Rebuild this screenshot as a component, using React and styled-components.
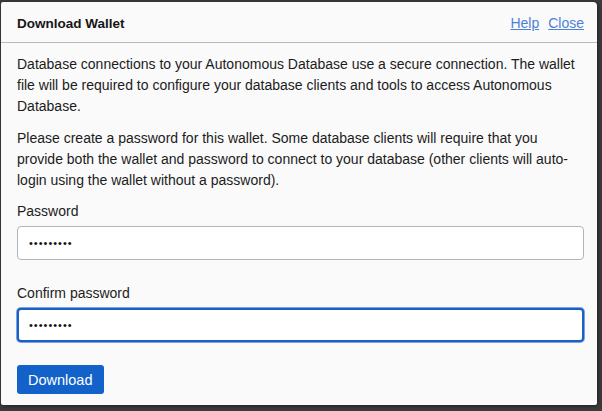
import React from "react";
import styled, { createGlobalStyle } from "styled-components";

const GlobalStyle = createGlobalStyle`
    html, body {
        margin: 0;
        padding: 0;
        background: #3c3c3c;
        font-family: "Liberation Sans", Arial, Helvetica, sans-serif;
    }
    #root {
        min-height: 411px;
        padding-top: 2px;
        padding-left: 1px;
        box-sizing: border-box;
    }
`;

const Dialog = styled.div`
    width: 596px;
    height: 403px;
    background: #fafafa;
    border-radius: 2px 4px 2px 2px;
    box-shadow: 1px 1px 4px rgba(0, 0, 0, 0.5);
    box-sizing: border-box;
    display: flex;
    flex-direction: column;
    overflow: hidden;
`;

const Header = styled.div`
    height: 42px;
    box-sizing: border-box;
    padding: 2px 13px 0 16px;
    border-bottom: 1px solid #b6b9c2;
    display: flex;
    align-items: center;
    justify-content: space-between;
`;

const Title = styled.h1`
    margin: 0;
    font-size: 13.5px;
    font-weight: bold;
    color: #161616;
`;

const Links = styled.div`
    display: flex;
    gap: 9px;
`;

const HeaderLink = styled.a`
    font-size: 14px;
    color: #4f80d8;
    text-decoration: underline;
    cursor: pointer;
`;

const Body = styled.div`
    padding: 11px 13px 11px 16px;
    color: #1c1c1c;
    font-size: 14px;
    line-height: 21px;
`;

const Paragraph = styled.p`
    margin: 0 0 ${(p) => (p.$last ? "10px" : "11px")};
`;

const Field = styled.div`
    display: flex;
    flex-direction: column;
    margin-bottom: ${(p) => p.$gap};
`;

const Label = styled.label`
    font-size: 14px;
    line-height: 21px;
    color: #1c1c1c;
    margin-bottom: 4px;
`;

const Input = styled.input`
    height: 34px;
    box-sizing: border-box;
    background: #fff;
    border: ${(p) => (p.$focused ? "2px solid #1a5fc6" : "1px solid #b1b4ba")};
    box-shadow: ${(p) => (p.$focused ? "0 0 0 1px #79a2e6" : "none")};
    border-radius: 4px;
    padding: 0 ${(p) => (p.$focused ? "10px" : "11px")};
    font-size: 11px;
    font-family: "Liberation Sans", Arial, sans-serif;
    color: #111;
    caret-color: #111;
    outline: none;
    letter-spacing: 1px;
`;

const DownloadButton = styled.button`
    align-self: flex-start;
    height: 29px;
    padding: 0 11px;
    border: none;
    border-radius: 3px;
    background: #1262c9;
    color: #fff;
    font-size: 14.5px;
    font-family: "Liberation Sans", Arial, sans-serif;
    cursor: pointer;
`;

export default function App() {
    return (
        <>
            <GlobalStyle />
            <Dialog role="dialog">
                <Header>
                    <Title>Download Wallet</Title>
                    <Links>
                        <HeaderLink>Help</HeaderLink>
                        <HeaderLink>Close</HeaderLink>
                    </Links>
                </Header>
                <Body>
                    <Paragraph>
                        Database connections to your Autonomous Database use a secure connection. The wallet
                        file will be required to configure your database clients and tools to access Autonomous
                        Database.
                    </Paragraph>
                    <Paragraph $last>
                        Please create a password for this wallet. Some database clients will require that you
                        provide both the wallet and password to connect to your database (other clients will auto-
                        login using the wallet without a password).
                    </Paragraph>
                    <Field $gap="23px">
                        <Label htmlFor="pw">Password</Label>
                        <Input id="pw" type="password" defaultValue="123456789" />
                    </Field>
                    <Field $gap="23px">
                        <Label htmlFor="pw2">Confirm password</Label>
                        <Input id="pw2" type="password" defaultValue="123456789" $focused autoFocus />
                    </Field>
                    <DownloadButton>Download</DownloadButton>
                </Body>
            </Dialog>
        </>
    );
}
